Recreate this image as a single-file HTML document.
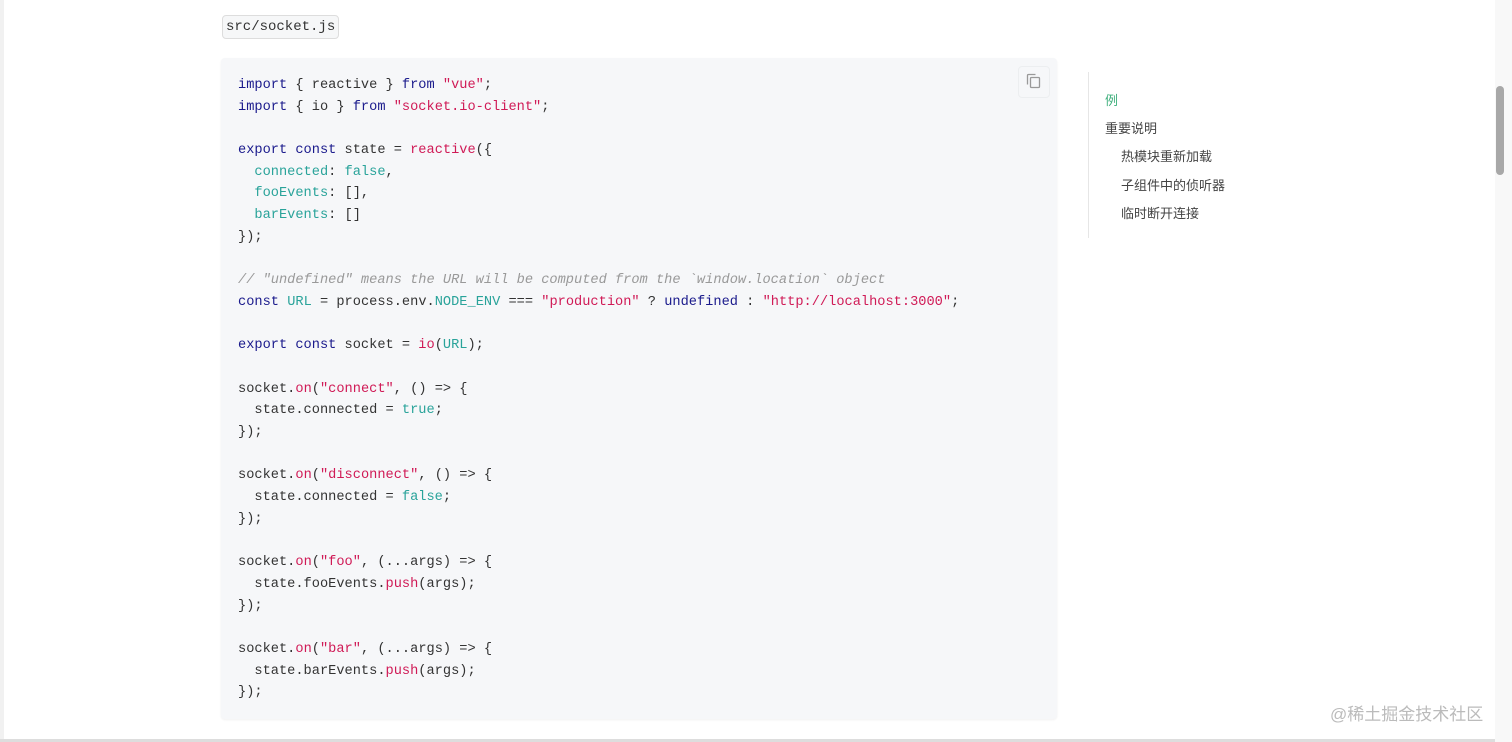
<!DOCTYPE html>
<html><head><meta charset="utf-8"><style>
body{margin:0;width:1512px;height:742px;background:#fff;overflow:hidden;position:relative;font-family:"Liberation Sans","Noto Sans CJK SC",sans-serif}
.fn{position:absolute;left:222px;top:15px;height:22px;padding:0 3px;border:1px solid #ddd;border-radius:4px;background:#f6f7f8;font:14px/23px "Liberation Mono",monospace;color:#333}
.code{position:absolute;left:221px;top:58px;width:836px;height:661px;background:#f6f7f9;border-radius:4px;box-shadow:0 1px 2px rgba(0,0,0,.06)}
pre{margin:0;position:absolute;left:17px;top:17px;font:13.66px/21.68px "Liberation Mono",monospace;color:#333}
.k{color:#1a1a8c}.s{color:#d01a56}.g{color:#29a39a}.c{color:#999;font-style:italic}
.cp{position:absolute;left:797px;top:8px;width:30px;height:30px;border-radius:4px;border:1px solid #eceef0}
.toc{position:absolute;left:1088px;top:72px;height:166px;border-left:1px solid #e6e6e6;font-size:13px;color:#444}
.toc div{position:absolute;white-space:nowrap}
.sb{position:absolute;left:1495px;top:0;width:17px;height:742px;background:#f8f8f8}
.th{position:absolute;left:1496px;top:86px;width:8px;height:89px;border-radius:4px;background:#a8a8a8}
.wm{position:absolute;left:1330px;top:700px;font-size:17px;color:#bbb}
.bl{position:absolute;left:0;top:739px;width:1512px;height:3px;background:#ddd}
.lb{position:absolute;left:0;top:0;width:4px;height:742px;background:#f1f1f1}
</style></head><body>
<div class="lb"></div>
<div class="fn">src/socket.js</div>
<div class="code">
<pre><span class="k">import</span> { reactive } <span class="k">from</span> <span class="s">"vue"</span>;
<span class="k">import</span> { io } <span class="k">from</span> <span class="s">"socket.io-client"</span>;

<span class="k">export const</span> state = <span class="s">reactive</span>({
  <span class="g">connected</span>: <span class="g">false</span>,
  <span class="g">fooEvents</span>: [],
  <span class="g">barEvents</span>: []
});

<span class="c">// "undefined" means the URL will be computed from the `window.location` object</span>
<span class="k">const</span> <span class="g">URL</span> = process.env.<span class="g">NODE_ENV</span> === <span class="s">"production"</span> ? <span class="k">undefined</span> : <span class="s">"http://localhost:3000"</span>;

<span class="k">export const</span> socket = <span class="s">io</span>(<span class="g">URL</span>);

socket.<span class="s">on</span>(<span class="s">"connect"</span>, () =&gt; {
  state.connected = <span class="g">true</span>;
});

socket.<span class="s">on</span>(<span class="s">"disconnect"</span>, () =&gt; {
  state.connected = <span class="g">false</span>;
});

socket.<span class="s">on</span>(<span class="s">"foo"</span>, (...args) =&gt; {
  state.fooEvents.<span class="s">push</span>(args);
});

socket.<span class="s">on</span>(<span class="s">"bar"</span>, (...args) =&gt; {
  state.barEvents.<span class="s">push</span>(args);
});</pre>
<div class="cp"><svg width="30" height="30" viewBox="0 0 30 30" fill="none" stroke="#999" stroke-width="1.3"><rect x="11.5" y="10.5" width="9" height="10" rx="1"/><path d="M8.5 17.5V8.5a1 1 0 0 1 1-1h7"/></svg></div>
</div>
<div class="toc">
<div style="left:16px;top:18px;color:#3eaf7c">例</div>
<div style="left:16px;top:46px">重要说明</div>
<div style="left:32px;top:74px">热模块重新加载</div>
<div style="left:32px;top:103px">子组件中的侦听器</div>
<div style="left:32px;top:131px">临时断开连接</div>
</div>
<div class="wm">@稀土掘金技术社区</div>
<div class="bl"></div>
<div class="sb"></div><div class="th"></div>
</body></html>
